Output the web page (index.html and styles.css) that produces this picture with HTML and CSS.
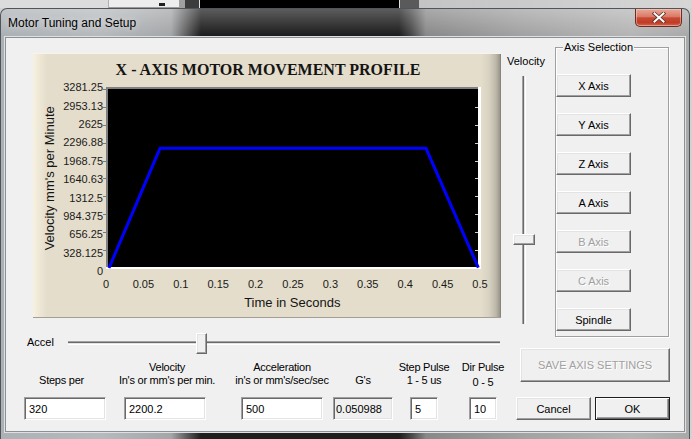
FILE: index.html
```html
<!DOCTYPE html>
<html>
<head>
<meta charset="utf-8">
<title>Motor Tuning and Setup</title>
<link rel="stylesheet" href="styles.css">
</head>
<body>
<div class="strip">
  <div class="s1"></div>
  <div class="s2"><span class="s2mark"></span></div>
  <div class="s3"></div>
  <div class="s4"></div>
  <div class="s5"></div>
  <div class="s6"></div>
  <div class="s7"></div>
</div>
<div class="window">
  <div class="titlebar">
    <span class="title">Motor Tuning and Setup</span>
    <div class="close">
      <svg width="14" height="11" viewBox="0 0 14 11">
        <path d="M2.5 1.5 L11.5 9.5 M11.5 1.5 L2.5 9.5" stroke="#5a3028" stroke-width="3.6" stroke-linecap="square" fill="none"/>
        <path d="M2.5 1.5 L11.5 9.5 M11.5 1.5 L2.5 9.5" stroke="#ffffff" stroke-width="2" stroke-linecap="square" fill="none"/>
      </svg>
    </div>
  </div>
  <div class="client">
    <div class="leftcol">
      <div class="chart">
        <svg width="468" height="265" viewBox="0 0 468 265">
          <text class="ctitle" x="235" y="22" text-anchor="middle">X - AXIS MOTOR MOVEMENT PROFILE</text>
          <rect x="73" y="34" width="375" height="182" fill="#ffffff"/>
          <rect x="73" y="34" width="372" height="180" fill="#808080"/>
          <rect x="75" y="36" width="370" height="178" fill="#000000"/>
          <g stroke="#7a7a7a" stroke-width="1">
            <line x1="70" y1="36.5" x2="73" y2="36.5"/>
            <line x1="70" y1="54.5" x2="73" y2="54.5"/>
            <line x1="70" y1="72.5" x2="73" y2="72.5"/>
            <line x1="70" y1="90.5" x2="73" y2="90.5"/>
            <line x1="70" y1="108.5" x2="73" y2="108.5"/>
            <line x1="70" y1="125.5" x2="73" y2="125.5"/>
            <line x1="70" y1="143.5" x2="73" y2="143.5"/>
            <line x1="70" y1="161.5" x2="73" y2="161.5"/>
            <line x1="70" y1="179.5" x2="73" y2="179.5"/>
            <line x1="70" y1="197.5" x2="73" y2="197.5"/>
          </g>
          <g stroke="#d0d0d0" stroke-width="1">
            <line x1="442" y1="54.5" x2="445" y2="54.5"/>
            <line x1="442" y1="72.5" x2="445" y2="72.5"/>
            <line x1="442" y1="90.5" x2="445" y2="90.5"/>
            <line x1="442" y1="108.5" x2="445" y2="108.5"/>
            <line x1="442" y1="125.5" x2="445" y2="125.5"/>
            <line x1="442" y1="143.5" x2="445" y2="143.5"/>
            <line x1="442" y1="161.5" x2="445" y2="161.5"/>
            <line x1="442" y1="179.5" x2="445" y2="179.5"/>
            <line x1="442" y1="197.5" x2="445" y2="197.5"/>
          </g>
          <polyline points="76,215 127,95.3 393,95.3 445.3,214.7" fill="none" stroke="#0000ff" stroke-width="3"/>
          <g class="ylab" text-anchor="end">
            <text x="70" y="38.3">3281.25</text>
            <text x="70" y="56.7">2953.13</text>
            <text x="70" y="75">2625</text>
            <text x="70" y="93.4">2296.88</text>
            <text x="70" y="111.8">1968.75</text>
            <text x="70" y="130.2">1640.63</text>
            <text x="70" y="148.5">1312.5</text>
            <text x="70" y="166.9">984.375</text>
            <text x="70" y="185.3">656.25</text>
            <text x="70" y="203.6">328.125</text>
            <text x="70" y="222">0</text>
          </g>
          <g class="xlab" text-anchor="middle">
            <text x="73" y="235">0</text>
            <text x="110.4" y="235">0.05</text>
            <text x="147.8" y="235">0.1</text>
            <text x="185.2" y="235">0.15</text>
            <text x="222.6" y="235">0.2</text>
            <text x="260" y="235">0.25</text>
            <text x="297.4" y="235">0.3</text>
            <text x="334.8" y="235">0.35</text>
            <text x="372.2" y="235">0.4</text>
            <text x="409.6" y="235">0.45</text>
            <text x="447" y="235">0.5</text>
          </g>
          <text class="axtitle" x="259.3" y="254" text-anchor="middle">Time in Seconds</text>
          <text class="axtitle" text-anchor="middle" transform="translate(21 125.3) rotate(-90)">Velocity mm's per Minute</text>
        </svg>
      </div>
      <div class="accel">
        <span class="accel-label">Accel</span>
        <div class="htrack"><div class="hthumb"></div></div>
      </div>
      <div class="fields">
        <div class="field f1">
          <div class="flabel"><span>Steps per</span></div>
          <input class="edit" type="text" value="320">
        </div>
        <div class="field f2">
          <div class="flabel"><span>Velocity</span><span>In's or mm's per min.</span></div>
          <input class="edit" type="text" value="2200.2">
        </div>
        <div class="field f3">
          <div class="flabel"><span>Acceleration</span><span>in's or mm's/sec/sec</span></div>
          <input class="edit" type="text" value="500">
        </div>
        <div class="field f4">
          <div class="flabel"><span>G's</span></div>
          <input class="edit ro" type="text" value="0.050988" readonly>
        </div>
        <div class="field f5">
          <div class="flabel"><span>Step Pulse</span><span>1 - 5 us</span></div>
          <input class="edit" type="text" value="5">
        </div>
        <div class="field f6">
          <div class="flabel"><span>Dir Pulse</span><span class="low">0 - 5</span></div>
          <input class="edit" type="text" value="10">
        </div>
      </div>
    </div>
    <div class="rightcol">
      <div class="rtop">
        <div class="vel">
          <div class="vel-label">Velocity</div>
          <div class="vtrack"><div class="vthumb"></div></div>
        </div>
        <div class="group">
          <span class="legend">Axis Selection</span>
          <button class="btn axis">X Axis</button>
          <button class="btn axis">Y Axis</button>
          <button class="btn axis">Z Axis</button>
          <button class="btn axis">A Axis</button>
          <button class="btn axis" disabled>B Axis</button>
          <button class="btn axis" disabled>C Axis</button>
          <button class="btn axis">Spindle</button>
        </div>
      </div>
      <button class="btn save" disabled>SAVE AXIS SETTINGS</button>
      <div class="okrow">
        <button class="btn cancel">Cancel</button>
        <button class="btn ok">OK</button>
      </div>
    </div>
  </div>
</div>
</body>
</html>
```

FILE: styles.css
```css
* { box-sizing: border-box; }
html, body { margin: 0; padding: 0; }
body {
  width: 692px;
  height: 439px;
  overflow: hidden;
  background: #d2d2d2;
  font-family: "Liberation Sans", Arial, sans-serif;
  font-size: 11px;
  color: #000;
}

/* desktop strip above the dialog */
.strip { display: flex; height: 8px; }
.s1 { width: 108px; background: #dcdcdc; }
.s2 { width: 71px; background: #ededed; border-bottom: 1px solid #9a9a9a; border-left: 1px solid #b0b0b0; position: relative; }
.s2mark { position: absolute; left: 50px; bottom: 1px; width: 6px; height: 3px; background: #202020; }
.s3 { width: 6px; background: #a0a0a0; }
.s4 { width: 14px; background: #3c3c3c; }
.s5 { width: 201px; background: #000; border-left: 1px solid #e0e0e0; border-right: 1px solid #e0e0e0; }
.s6 { width: 19px; background: #5a5a5a; }
.s7 { flex: 1; background: linear-gradient(to right, #c4c4c4, #d6d6d6); }

/* window frame */
.window {
  width: 690px;
  height: 431px;
  border: 1px solid #50555a;
  border-bottom: none;
  border-radius: 7px 7px 0 0;
  padding: 0 4px 7px 4px;
  background:
    linear-gradient(to bottom, rgba(255,255,255,0.28), rgba(255,255,255,0) 26px),
    linear-gradient(to right, #acb1b5 0, #b6babd 100px, #a4a6a8 170px, #5c5c5c 186px, #1e1e1e 200px, #1e1e1e 398px, #474747 410px, #898989 425px, #a2a2a2 520px, #b5b5b5 630px, #a9a9a9 690px);
}
.titlebar {
  height: 28px;
  display: flex;
  align-items: center;
  padding-left: 3px;
}
.title {
  font-family: "Liberation Sans", Arial, sans-serif;
  font-size: 12px;
  color: #000;
  text-shadow: 0 0 6px rgba(255,255,255,0.7);
}
.close {
  margin-left: auto;
  margin-right: 3px;
  align-self: flex-start;
  width: 47px;
  height: 18px;
  border: 1px solid #6a2d22;
  border-top: none;
  border-radius: 0 0 5px 5px;
  background: linear-gradient(to bottom, #e9a898 0%, #da7a66 45%, #c84a34 52%, #c03c26 80%, #d2694e 100%);
  box-shadow: inset 0 0 0 1px rgba(255,220,210,0.45);
  display: flex;
  align-items: center;
  justify-content: center;
}
.close svg { display: block; }

/* client area */
.client {
  width: 680px;
  height: 395px;
  background: #f0f0f0;
  border: 1px solid #8b9094;
  box-shadow: 0 0 0 1px #dde1e4;
  display: flex;
}
.leftcol { width: 495px; display: flex; flex-direction: column; }
.rightcol { flex: 1; display: flex; flex-direction: column; }

/* chart panel */
.chart {
  margin-left: 27px;
  margin-top: 15px;
  width: 468px;
  height: 265px;
  background: linear-gradient(to right, #f7f1e0 0, #efe8d6 6px, #e4ddcb 14px, #e4ddcb 448px, #d8d2c2 456px, #bdb7a9 463px, #9a958a 467px, #77736b 468px);
  box-shadow: inset 0 1px 0 #f8f4ea, inset 0 -1px 0 #a39e93;
}
.chart svg { display: block; }
.ctitle { font-family: "Liberation Serif", "Times New Roman", serif; font-weight: bold; font-size: 16px; fill: #141414; }
.ylab text, .xlab text { font-family: "Liberation Sans", Arial, sans-serif; font-size: 11px; fill: #1a1a1a; }
.axtitle { font-family: "Liberation Sans", Arial, sans-serif; font-size: 13px; fill: #141414; }

/* accel slider */
.accel {
  margin-top: 14px;
  height: 21px;
  display: flex;
  align-items: center;
  padding-left: 21px;
}
.accel-label { width: 41px; line-height: 13px; }
.htrack {
  position: relative;
  width: 432px;
  height: 4px;
  border-top: 1px solid #a0a0a0;
  border-bottom: 1px solid #ffffff;
  background: linear-gradient(to bottom, #696969 50%, #e3e3e3 50%);
}
.hthumb {
  position: absolute;
  left: 128px;
  top: -9px;
  width: 11px;
  height: 21px;
}

/* fields */
.fields { display: flex; margin-top: 8px; align-items: flex-start; }
.field { display: flex; flex-direction: column; align-items: center; }
.flabel {
  height: 26px;
  display: flex;
  flex-direction: column;
  justify-content: flex-end;
  align-items: center;
  line-height: 13px;
  white-space: nowrap;
  letter-spacing: -0.25px;
}
.flabel .low { position: relative; top: 2px; }
.f1 { width: 82px; margin-left: 18px; }
.f1 .flabel { padding-right: 7px; }
.f2 { width: 82px; margin-left: 18px; }
.f2 .flabel { padding-left: 4px; }
.f3 { width: 82px; margin-left: 35px; }
.f4 { width: 60px; margin-left: 10px; }
.f5 { width: 28px; margin-left: 17px; }
.f6 { width: 28px; margin-left: 31px; }
.edit {
  margin-top: 10px;
  width: 100%;
  height: 23px;
  border: 1px solid;
  border-color: #a0a0a0 #ffffff #ffffff #a0a0a0;
  box-shadow: inset 1px 1px 0 #696969, inset -1px -1px 0 #e3e3e3;
  background: #fff;
  padding: 0 0 0 4px;
  font-family: "Liberation Sans", Arial, sans-serif;
  font-size: 11px;
  color: #000;
  outline: none;
}
.edit.ro { background: #f0f0f0; padding-left: 2px; }

/* right column */
.rtop { display: flex; height: 299px; }
.vel { width: 54px; display: flex; flex-direction: column; }
.vel-label { margin-top: 17px; padding-left: 6px; line-height: 13px; }
.vtrack {
  position: relative;
  margin-left: 21px;
  margin-top: 8px;
  width: 4px;
  height: 248px;
  border-left: 1px solid #a0a0a0;
  border-right: 1px solid #ffffff;
  background: linear-gradient(to right, #696969 50%, #e3e3e3 50%);
}
.vthumb {
  position: absolute;
  left: -10px;
  top: 158px;
  width: 22px;
  height: 11px;
}
.hthumb, .vthumb {
  background: #f0f0f0;
  border: 1px solid;
  border-color: #ffffff #696969 #696969 #ffffff;
  box-shadow: inset -1px -1px 0 #a0a0a0, inset 1px 1px 0 #e3e3e3;
}
.group {
  position: relative;
  margin-top: 9px;
  width: 114px;
  height: 290px;
  border: 1px solid #a0a0a0;
  box-shadow: inset 1px 1px 0 #ffffff, 1px 1px 0 #ffffff;
  display: flex;
  flex-direction: column;
  gap: 16px;
  padding-top: 26px;
}
.legend {
  position: absolute;
  left: 7px;
  top: -7px;
  padding: 0 1px;
  line-height: 13px;
  background: #f0f0f0;
}
.btn {
  font-family: "Liberation Sans", Arial, sans-serif;
  font-size: 11px;
  color: #000;
  background: #f0f0f0;
  border: 1px solid;
  border-color: #ffffff #696969 #696969 #ffffff;
  box-shadow: inset -1px -1px 0 #a0a0a0, inset 1px 1px 0 #e3e3e3;
  padding: 0;
  margin: 0;
}
.btn:disabled { color: #a0a0a0; text-shadow: 1px 1px 0 #ffffff; }
.axis { width: 75px; height: 23px; flex: none; }
.save { margin-top: 11px; margin-left: 19px; width: 150px; height: 34px; }
.okrow { display: flex; gap: 4px; margin-top: 15px; margin-left: 15px; }
.cancel, .ok { width: 75px; height: 23px; }
.ok {
  border: 1px solid #1e1e1e;
  box-shadow: inset 1px 1px 0 #ffffff, inset -1px -1px 0 #696969, inset -2px -2px 0 #a0a0a0;
}
```
